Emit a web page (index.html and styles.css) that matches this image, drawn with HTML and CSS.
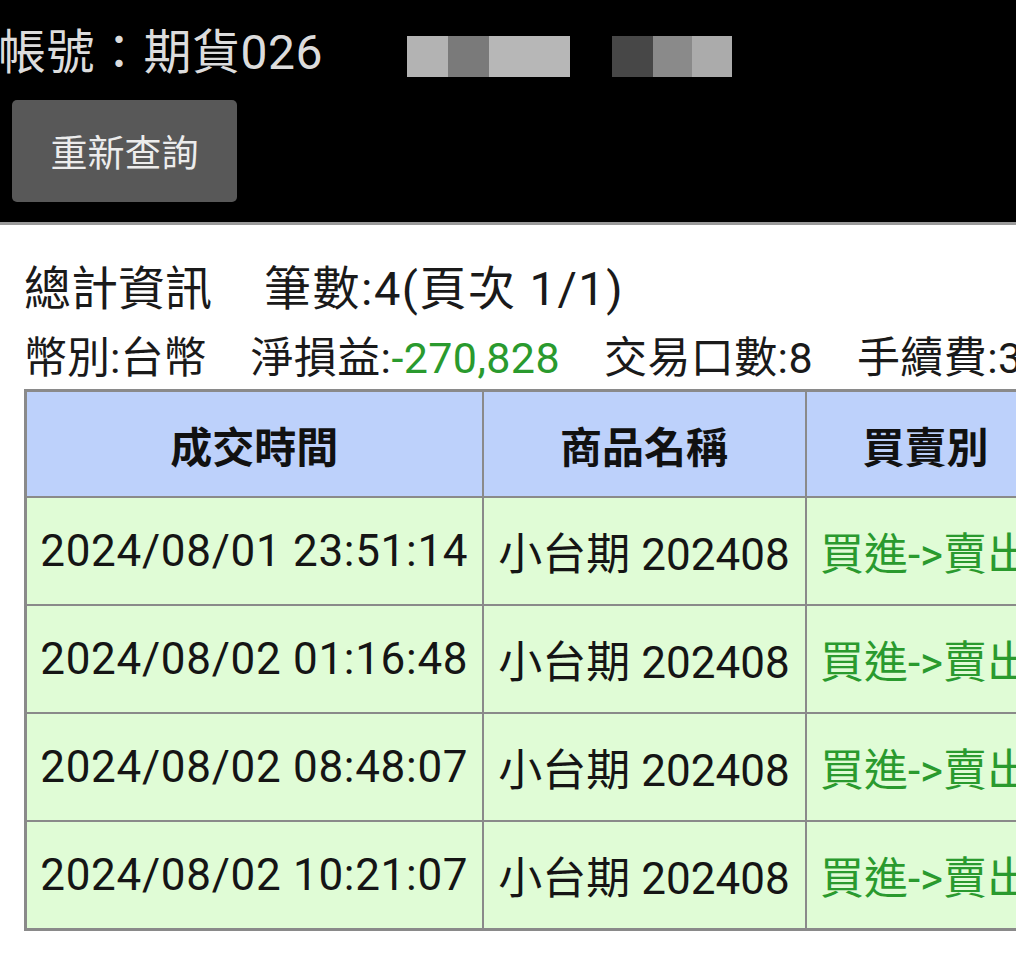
FILE: index.html
```html
<!DOCTYPE html>
<html lang="zh-Hant">
<head>
<meta charset="utf-8">
<title>成交查詢</title>
<link rel="stylesheet" href="styles.css">
</head>
<body>
<div class="top">
  <div class="account">帳號：期貨026<span class="gap1"></span><span class="blk b1"></span><span class="blk b2"></span><span class="blk b3"></span><span class="gap2"></span><span class="blk b4"></span><span class="blk b5"></span><span class="blk b6"></span></div>
  <button class="requery" type="button">重新查詢</button>
</div>
<div class="summary">
  <div class="line1"><span>總計資訊</span><span class="sp">筆數:4(頁次 1/1)</span></div>
  <div class="line2"><span>幣別:台幣</span><span class="sp">淨損益:<span class="neg">-270,828</span></span><span class="sp">交易口數:8</span><span class="sp">手續費:3</span></div>
</div>
<div class="tablewrap">
<table class="grid">
  <colgroup><col class="c1"><col class="c2"><col class="c3"><col class="c4"></colgroup>
  <thead>
    <tr><th>成交時間</th><th>商品名稱</th><th>買賣別</th><th>口數</th></tr>
  </thead>
  <tbody>
    <tr><td class="time">2024/08/01 23:51:14</td><td>小台期 202408</td><td class="buy">買進-&gt;賣出</td><td>2</td></tr>
    <tr><td class="time">2024/08/02 01:16:48</td><td>小台期 202408</td><td class="buy">買進-&gt;賣出</td><td>2</td></tr>
    <tr><td class="time">2024/08/02 08:48:07</td><td>小台期 202408</td><td class="buy">買進-&gt;賣出</td><td>2</td></tr>
    <tr><td class="time">2024/08/02 10:21:07</td><td>小台期 202408</td><td class="buy">買進-&gt;賣出</td><td>2</td></tr>
  </tbody>
</table>
</div>
</body>
</html>
```
FILE: styles.css
```css
html, body {
  margin: 0;
  padding: 0;
  background: #fff;
  overflow: hidden;
  width: 1016px;
  height: 962px;
}
body {
  font-family: Roboto, "Noto Sans CJK TC", sans-serif;
  color: #222;
}
.top {
  background: #000;
  height: 222px;
  border-bottom: 3px solid #9a9a9a;
  box-sizing: content-box;
  display: flex;
  flex-direction: column;
  align-items: flex-start;
}
.account {
  color: #dcdcdc;
  font-size: 48px;
  line-height: 56px;
  margin-top: 25px;
  margin-left: -2px;
  letter-spacing: 0.5px;
  white-space: nowrap;
  display: flex;
  align-items: center;
}
.gap1 { display: inline-block; width: 84px; }
.gap2 { display: inline-block; width: 42px; }
.blk { display: inline-block; height: 41px; margin-top: 6px; }
.b1 { width: 41px; background: #b3b3b3; }
.b2 { width: 41px; background: #7a7a7a; }
.b3 { width: 81px; background: #b7b7b7; }
.b4 { width: 41px; background: #474747; }
.b5 { width: 39px; background: #8a8a8a; }
.b6 { width: 40px; background: #ababab; }
.requery {
  margin: 19px 0 0 12px;
  width: 225px;
  height: 102px;
  background: #585858;
  color: #ececec;
  border: none;
  border-radius: 5px;
  font-family: Roboto, "Noto Sans CJK TC", sans-serif;
  font-size: 37px;
  padding: 0;
}
.summary {
  padding: 0 24px;
  white-space: nowrap;
}
.line1 {
  font-size: 47px;
  line-height: 56px;
  margin-top: 36px;
  color: #1a1a1a;
}
.line1 .sp { margin-left: 52px; letter-spacing: 1.5px; }
.line2 {
  font-size: 43px;
  line-height: 48px;
  margin-top: 17px;
  color: #1a1a1a;
}
.line2 .sp { margin-left: 44px; letter-spacing: 0.4px; }
.neg { color: #2a9a2e; }
.tablewrap {
  margin: 7px 0 0 24px;
}
.grid {
  border-collapse: collapse;
  table-layout: fixed;
  width: 1220px;
  border: 3px solid #8a8a8a;
}
.c1 { width: 457px; }
.c2 { width: 323px; }
.c3 { width: 240px; }
.c4 { width: 200px; }
.grid th, .grid td {
  border: 2px solid #8a8a8a;
  text-align: center;
  white-space: nowrap;
  padding: 0;
}
.grid th {
  background: #bdd1fb;
  font-size: 42px;
  font-weight: bold;
  height: 104px;
  color: #111;
}
.grid td {
  background: #e0fcd6;
  font-size: 44px;
  height: 106px;
  color: #151515;
}
.grid td.time { letter-spacing: 0.7px; }
.grid td.buy { color: #2a9a2e; }
```
